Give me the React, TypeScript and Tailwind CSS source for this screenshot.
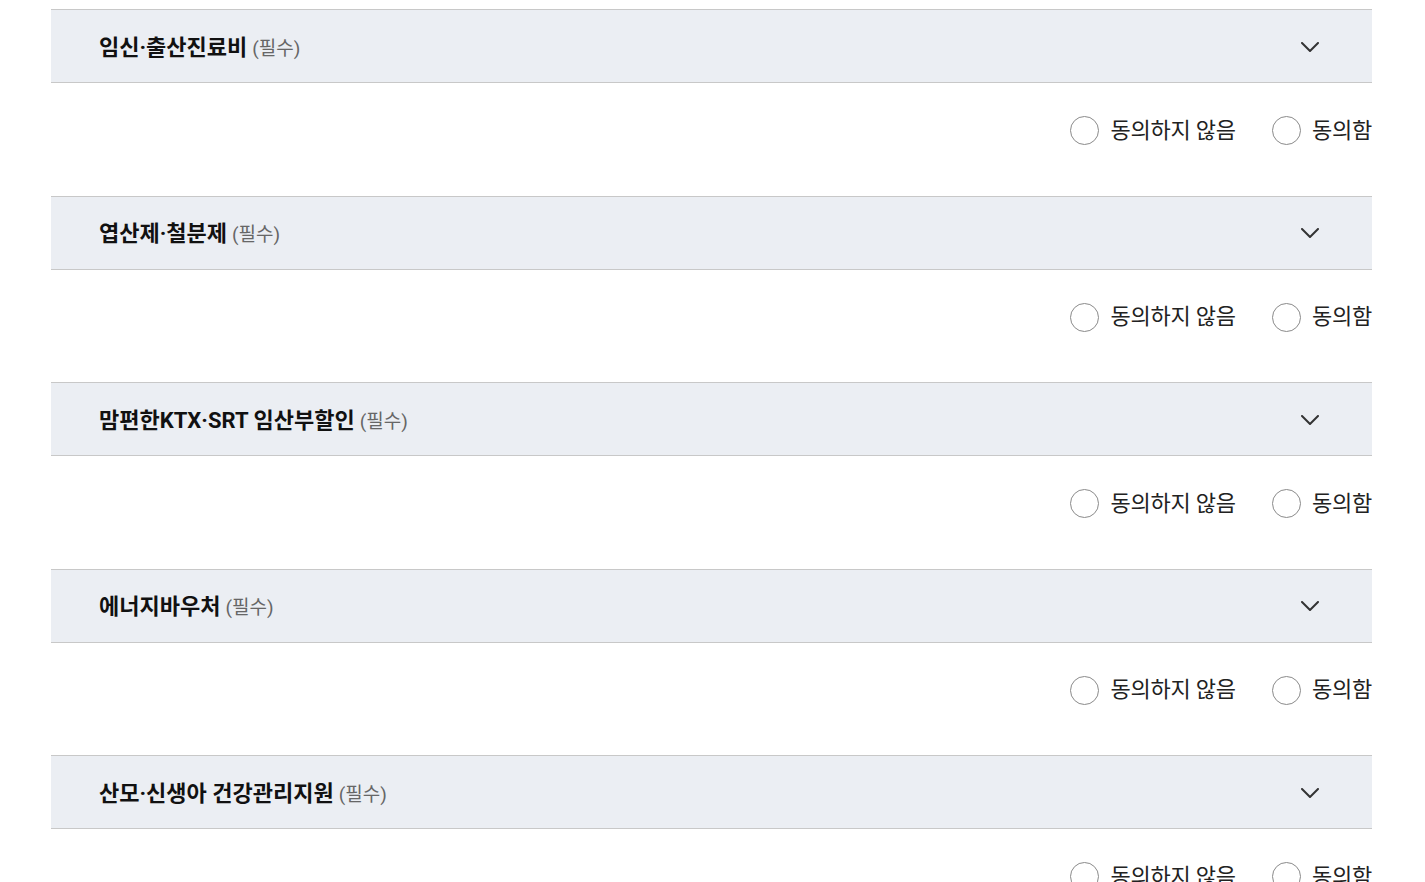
import React from 'react';

const items = [
  '임신·출산진료비',
  '엽산제·철분제',
  '맘편한KTX·SRT 임산부할인',
  '에너지바우처',
  '산모·신생아 건강관리지원',
];

function Radio({ label }: { label: string }) {
  return (
    <label className="flex items-center gap-[11px] cursor-pointer">
      <span className="w-[29px] h-[29px] rounded-full border border-[#8a8a8a] bg-white" />
      <span className="text-[22px] text-[#222] leading-none tracking-[-0.2px]">{label}</span>
    </label>
  );
}

export default function App() {
  return (
    <div className="min-h-screen bg-white pt-[9px] px-[51px] pr-[53px]" style={{ fontFamily: 'Roboto, "Noto Sans CJK KR", sans-serif' }}>
      {items.map((title) => (
        <section key={title}>
          <div className="h-[74px] bg-[#ebeef3] border-y border-[#c8c8c8] flex items-center justify-between pl-[48px] pr-[53px]">
            <h3 className="flex items-baseline gap-[5px] pt-[2px]">
              <span className="text-[22px] font-bold text-[#111]">{title}</span>
              <span className="text-[19px] text-[#666]">(필수)</span>
            </h3>
            <svg width="18" height="10" viewBox="0 0 18 10" fill="none" className="mt-[1px]">
              <path d="M1 1l8 8 8-8" stroke="#333" strokeWidth="2" strokeLinecap="round" strokeLinejoin="round" />
            </svg>
          </div>
          <div className="h-[112.5px] flex items-start justify-end gap-[36px] pt-[33px]">
            <Radio label="동의하지 않음" />
            <Radio label="동의함" />
          </div>
        </section>
      ))}
    </div>
  );
}
